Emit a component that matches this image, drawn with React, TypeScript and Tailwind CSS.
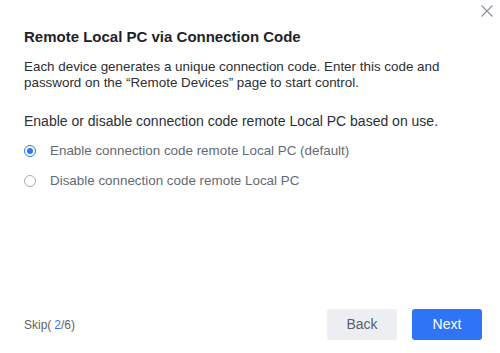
import { useState } from "react";

export default function App() {
  const [enabled, setEnabled] = useState(true);

  const options = [
    { value: true, label: "Enable connection code remote Local PC (default)" },
    { value: false, label: "Disable connection code remote Local PC" },
  ];

  return (
    <div
      className="relative flex h-[353px] w-[500px] flex-col bg-white text-[#1f2329]"
      style={{ fontFamily: '"Liberation Sans", "Noto Sans CJK SC", sans-serif' }}
    >
      <button className="absolute right-[7px] top-[4px] flex h-[13px] w-[13px] items-center justify-center text-[#8a909b]">
        <svg viewBox="0 0 12 12" className="h-[12px] w-[12px]" fill="none" stroke="currentColor" strokeWidth="1.1">
          <path d="M0.5 0.5l11 11M11.5 0.5l-11 11" />
        </svg>
      </button>

      <div className="flex-1 px-[24px] pt-[27px]">
        <h2 className="text-[15px] font-bold leading-[20px]">
          Remote Local PC via Connection Code
        </h2>
        <p className="mt-[12px] text-[13.4px] leading-[16px] text-[#2b2f36]">
          Each device generates a unique connection code. Enter this code and
          password on the “Remote Devices” page to start control.
        </p>
        <p className="mt-[22px] text-[14px] leading-[17px] text-[#2b2f36]">
          Enable or disable connection code remote Local PC based on use.
        </p>
        <div className="mt-[12px] flex flex-col gap-[13px]">
          {options.map((o) => (
            <label
              key={o.label}
              className="flex cursor-pointer items-center gap-[14px] text-[13.4px] leading-[17px] text-[#646a73]"
              onClick={() => setEnabled(o.value)}
            >
              {enabled === o.value ? (
                <span className="flex h-[12px] w-[12px] items-center justify-center rounded-full border border-[#2f74f5]">
                  <span className="h-[6px] w-[6px] rounded-full bg-[#2f74f5]" />
                </span>
              ) : (
                <span className="h-[12px] w-[12px] rounded-full border border-[#a8adb5]" />
              )}
              {o.label}
            </label>
          ))}
        </div>
      </div>

      <div className="flex items-center justify-between pb-[13px] pl-[24px] pr-[18px]">
        <span className="text-[12px] text-[#5f6368]">
          Skip(<span className="ml-[3px] text-[#2f74f5]">2</span>/6)
        </span>
        <div className="flex gap-[15px]">
          <button className="h-[31px] w-[70px] rounded-[3px] bg-[#eceef2] text-[14px] text-[#5a5f6b]">
            Back
          </button>
          <button className="h-[31px] w-[70px] rounded-[3px] bg-[#2f74f5] text-[14px] text-white">
            Next
          </button>
        </div>
      </div>
    </div>
  );
}
